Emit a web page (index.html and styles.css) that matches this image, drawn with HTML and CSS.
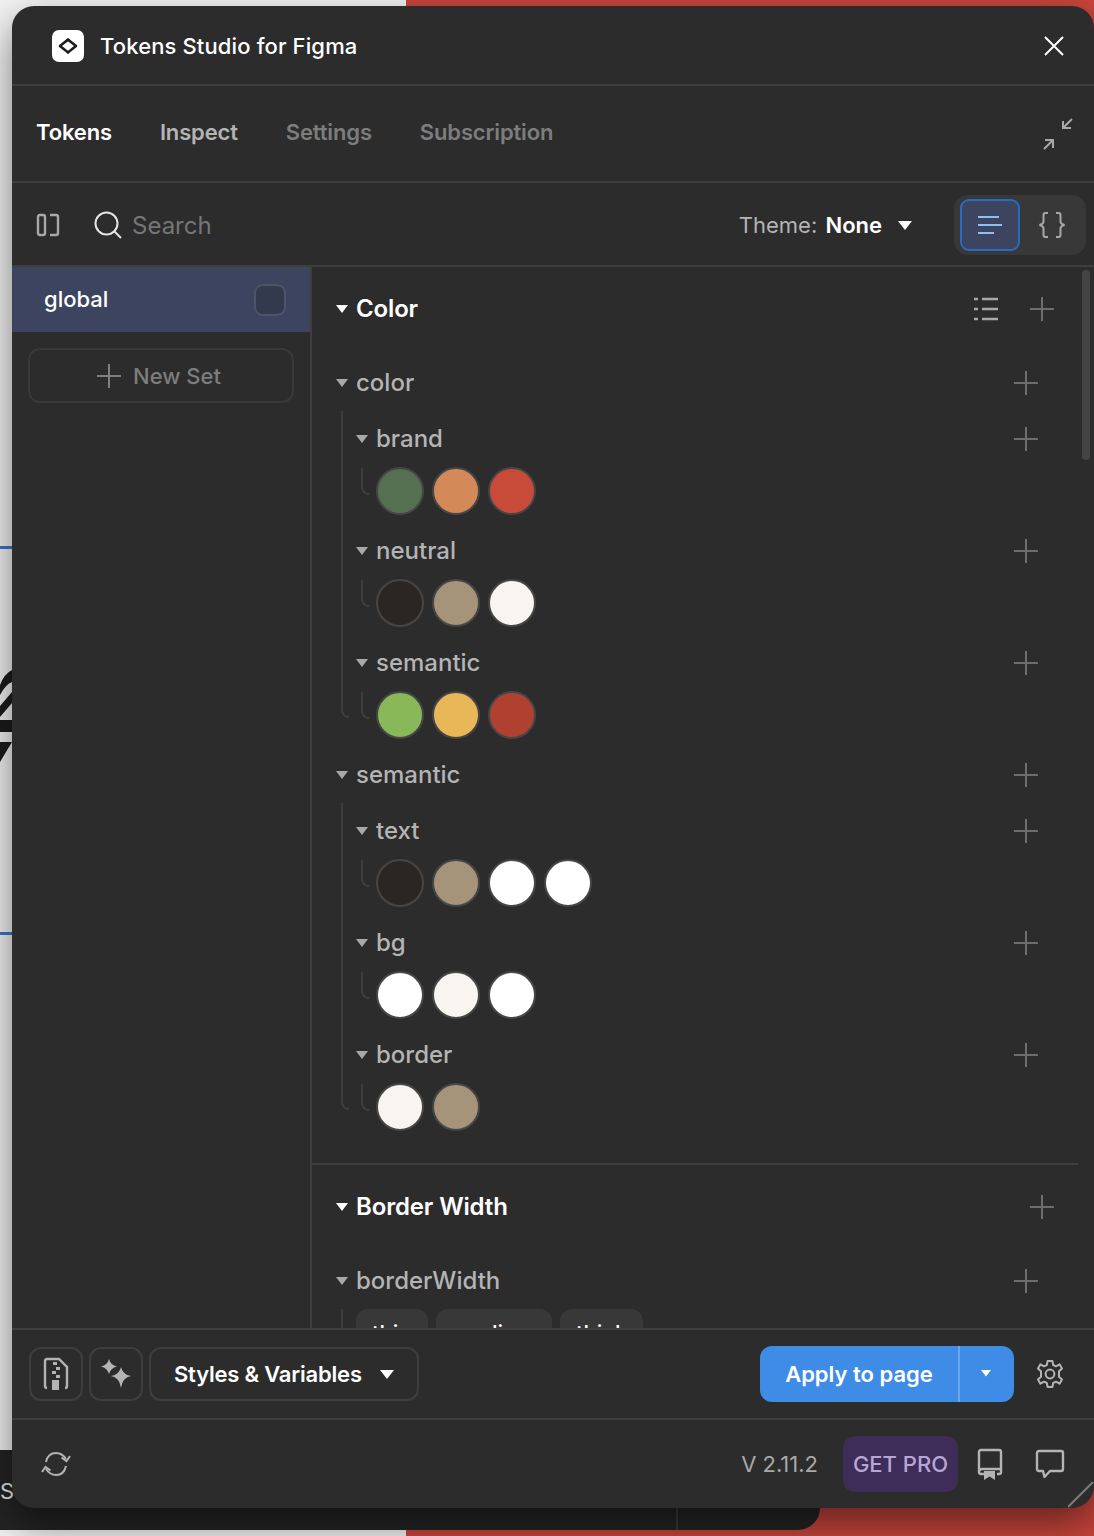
FILE: index.html
```html
<!DOCTYPE html>
<html lang="en">
<head>
<meta charset="utf-8">
<title>Tokens Studio for Figma</title>
<link rel="stylesheet" href="styles.css">
</head>
<body>
<div class="desktop">
  <div class="bg-white"></div>
  <div class="bg-red"></div>
  <div class="bg-line bg-line-a"></div>
  <div class="bg-line bg-line-b"></div>
  <svg class="bg-logo" width="12" height="100" viewBox="0 0 12 100"><path d="M0 16 Q4 5 12 1 V13 Q6 15 0 26 Z M0 37 L12 23 V34 L0 48 Z M0 51 H12 V63 H0 Z M0 73 H12 L0 93 Z" fill="#1c1c1c"/></svg>
  <div class="bg-dock"><span class="bg-dock-s">S</span><span class="bg-dock-rule"></span></div>

  <section class="window">
    <header class="titlebar">
      <div class="logo">
        <svg width="22" height="20" viewBox="0 0 22 20"><path d="M11 3.5 Q12.5 5 14 6 L19 10 L14 14 Q12.5 15 11 16.5 Q9.5 15 8 14 L3 10 L8 6 Q9.5 5 11 3.5 Z" fill="#fff" stroke="#1c1c1c" stroke-width="2.6" stroke-linejoin="round"/></svg>
      </div>
      <h1 class="title">Tokens Studio for Figma</h1>
      <svg class="close" width="22" height="22" viewBox="0 0 22 22"><path d="M2 2 L20 20 M20 2 L2 20" stroke="#fff" stroke-width="2" fill="none"/></svg>
    </header>

    <nav class="tabs">
      <span class="tab tab-on">Tokens</span>
      <span class="tab tab-mid">Inspect</span>
      <span class="tab">Settings</span>
      <span class="tab">Subscription</span>
      <svg class="collapse" width="32" height="32" viewBox="0 0 32 32"><path d="M30 1 L21 10 M21 3 V10 H29 M2 31 L11 22 M3 22 H11 V30" stroke="#a8a8a8" stroke-width="2" fill="none"/></svg>
    </nav>

    <div class="toolbar">
      <svg class="panel-icon" width="24" height="24" viewBox="0 0 24 24"><path d="M4 2 H7 Q9 2 9 4 V20 Q9 22 7 22 H4 Q2 22 2 20 V4 Q2 2 4 2 Z M14 2 H20 Q22 2 22 4 V20 Q22 22 20 22 H14" stroke="#a8a8a8" stroke-width="2.4" fill="none"/></svg>
      <svg class="search-icon" width="28" height="28" viewBox="0 0 28 28"><circle cx="12.5" cy="12.5" r="11" stroke="#e4e4e4" stroke-width="2" fill="none"/><path d="M20.5 20.5 L27 27" stroke="#e4e4e4" stroke-width="2"/></svg>
      <span class="search-text">Search</span>
      <span class="theme">Theme: <b>None</b></span>
      <svg class="caret caret-theme" width="14" height="10" viewBox="0 0 14 10"><path d="M0 0 H14 L7 9 Z" fill="#fff"/></svg>
      <div class="toggle">
        <span class="toggle-btn toggle-on">
          <svg width="26" height="22" viewBox="0 0 26 22"><path d="M1 3 H22 M1 11 H25 M1 19 H17" stroke="#8cc0f4" stroke-width="2"/></svg>
        </span>
        <span class="toggle-btn">
          <svg width="30" height="28" viewBox="0 0 30 28"><path d="M11 2 H8.5 Q6.5 2 6.5 4 V10.5 Q6.5 13 2.5 14 Q6.5 15 6.5 17.5 V24 Q6.5 26 8.5 26 H11 M19 2 H21.5 Q23.5 2 23.5 4 V10.5 Q23.5 13 27.5 14 Q23.5 15 23.5 17.5 V24 Q23.5 26 21.5 26 H19" stroke="#a8a8a8" stroke-width="2" fill="none"/></svg>
        </span>
      </div>
    </div>

    <div class="body">
      <aside class="sidebar">
        <div class="set-row"><span>global</span><span class="check"></span></div>
        <div class="new-set">
          <svg class="plus-svg" width="24" height="24" viewBox="0 0 24 24"><path d="M12 0 V24 M0 12 H24" stroke="#808080" stroke-width="2"/></svg>
          <span>New Set</span>
        </div>
      </aside>

      <main class="tokens">
        <div class="scroll-thumb"></div>

        <section class="section section-rule">
          <div class="row heading">
            <i class="tri tri-white"></i><span>Color</span>
            <svg class="list-icon" width="24" height="26" viewBox="0 0 24 26"><path d="M0 3 H4 M8 3 H24 M0 13 H4 M8 13 H24 M0 23 H4 M8 23 H24" stroke="#a8a8a8" stroke-width="2.4"/></svg>
            <i class="plus plus-heading"></i>
          </div>
          <div class="gap"></div>
          <div class="row group"><i class="tri"></i><span>color</span><i class="plus"></i></div>
          <div class="nest">
            <div class="rail"></div>
            <div class="nest-body">
              <div class="row sub"><i class="tri"></i><span>brand</span><i class="plus"></i></div>
              <div class="swatches"><i class="tick"></i><i class="dot c-green"></i><i class="dot c-orange"></i><i class="dot c-red"></i></div>
              <div class="row sub"><i class="tri"></i><span>neutral</span><i class="plus"></i></div>
              <div class="swatches"><i class="tick"></i><i class="dot c-ink"></i><i class="dot c-sand"></i><i class="dot c-cream"></i></div>
              <div class="row sub"><i class="tri"></i><span>semantic</span><i class="plus"></i></div>
              <div class="swatches"><i class="tick"></i><i class="dot c-lime"></i><i class="dot c-yellow"></i><i class="dot c-brick"></i></div>
            </div>
          </div>
          <div class="row group"><i class="tri"></i><span>semantic</span><i class="plus"></i></div>
          <div class="nest">
            <div class="rail"></div>
            <div class="nest-body">
              <div class="row sub"><i class="tri"></i><span>text</span><i class="plus"></i></div>
              <div class="swatches"><i class="tick"></i><i class="dot c-ink"></i><i class="dot c-sand"></i><i class="dot c-white"></i><i class="dot c-white"></i></div>
              <div class="row sub"><i class="tri"></i><span>bg</span><i class="plus"></i></div>
              <div class="swatches"><i class="tick"></i><i class="dot c-white"></i><i class="dot c-cream"></i><i class="dot c-white"></i></div>
              <div class="row sub"><i class="tri"></i><span>border</span><i class="plus"></i></div>
              <div class="swatches"><i class="tick"></i><i class="dot c-cream"></i><i class="dot c-sand"></i></div>
            </div>
          </div>
        </section>

        <section class="section">
          <div class="row heading"><i class="tri tri-white"></i><span>Border Width</span><i class="plus plus-heading"></i></div>
          <div class="gap"></div>
          <div class="row group"><i class="tri"></i><span>borderWidth</span><i class="plus"></i></div>
          <div class="nest nest-open">
            <div class="rail"></div>
            <div class="nest-body chips">
              <span class="chip">thin</span><span class="chip">medium</span><span class="chip">thick</span>
            </div>
          </div>
        </section>
      </main>
    </div>

    <div class="actions">
      <span class="square-btn">
        <svg width="26" height="34" viewBox="0 0 26 34"><path d="M4 31 Q2 31 2 29 V4 Q2 2 4 2 H16 L24 10 V29 Q24 31 22 31" stroke="#b4b4b4" stroke-width="2.4" fill="none"/><path d="M10 5 H14 V8 H10 Z M13 10 H17 V13 H13 Z M9 14 H13 V17 H9 Z M13 18 H17 V21 H13 Z M9 23 H16 V33 H9 Z" fill="#b4b4b4"/></svg>
      </span>
      <span class="square-btn">
        <svg width="30" height="30" viewBox="0 0 30 30"><path d="M8 0 Q9.5 6 16 7.5 Q9.5 9 8 15 Q6.5 9 0 7.5 Q6.5 6 8 0 Z M20 8 Q21.5 15.500 30 17 Q21.500 18.500 20 29 Q18.500 18.500 10 17 Q18.500 15.500 20 8 Z" fill="#b4b4b4"/></svg>
      </span>
      <span class="select-btn">Styles &amp; Variables
        <svg class="caret" width="14" height="10" viewBox="0 0 14 10"><path d="M0 0 H14 L7 9 Z" fill="#fff"/></svg>
      </span>
      <span class="apply">
        <span class="apply-main">Apply to page</span>
        <span class="apply-more"><svg width="10" height="7" viewBox="0 0 10 7"><path d="M0 0 H10 L5 6.5 Z" fill="#fff"/></svg></span>
      </span>
      <svg class="gear" width="30" height="30" viewBox="0 0 30 30"><path d="M12.6 2 H17.4 L18.2 6 L21 7.3 L24.6 5.3 L27 9.4 L24 12.2 V15 V17.8 L27 20.6 L24.6 24.7 L21 22.7 L18.2 24 L17.4 28 H12.6 L11.8 24 L9 22.7 L5.4 24.7 L3 20.6 L6 17.8 V12.2 L3 9.4 L5.4 5.3 L9 7.3 L11.8 6 Z" stroke="#b4b4b4" stroke-width="2" stroke-linejoin="round" fill="none"/><circle cx="15" cy="15" r="4.4" stroke="#b4b4b4" stroke-width="2" fill="none"/></svg>
    </div>

    <footer class="statusbar">
      <svg class="sync" width="30" height="26" viewBox="0 0 30 26"><path d="M5 11 Q7 2 15 2 Q21 2 25 8 M25 15 Q23 24 15 24 Q9 24 5 18" stroke="#b4b4b4" stroke-width="2" fill="none"/><path d="M29 5 L25.5 10 L20.5 6.5 M1 21 L4.5 16 L9.5 19.5" stroke="#b4b4b4" stroke-width="2" fill="none"/></svg>
      <span class="version">V 2.11.2</span>
      <span class="pro">GET PRO</span>
      <svg class="book" width="26" height="32" viewBox="0 0 26 32"><path d="M7 26 H4 Q2 26 2 24 V4 Q2 2 4 2 H22 Q24 2 24 4 V24 Q24 26 22 26 H20 M2 24 Q2 21 5 21 H24" stroke="#b4b4b4" stroke-width="2.4" fill="none"/><path d="M7 23 H18 V32 L12.5 28.5 L7 32 Z" fill="#b4b4b4"/></svg>
      <svg class="chat" width="30" height="30" viewBox="0 0 30 30"><path d="M4 2 H26 Q28 2 28 4 V20 Q28 22 26 22 H15 L9.5 28 L8 22 H4 Q2 22 2 20 V4 Q2 2 4 2 Z" stroke="#b4b4b4" stroke-width="2.4" stroke-linejoin="round" fill="none"/></svg>
      <svg class="resize" width="26" height="26" viewBox="0 0 26 26"><path d="M0 25 L25 0" stroke="#7c7c7c" stroke-width="2"/></svg>
    </footer>
  </section>
</div>
</body>
</html>
```

FILE: styles.css
```css
* { box-sizing: border-box; }

html, body {
  margin: 0;
  height: 100%;
  overflow: hidden;
}

body {
  font-family: Inter, "Liberation Sans", sans-serif;
  color: #fff;
  background: #f3f3f3;
}

.desktop {
  position: relative;
  width: 1094px;
  height: 1536px;
  overflow: hidden;
}

.bg-white {
  position: absolute;
  left: 0;
  top: 0;
  width: 406px;
  height: 1536px;
  background: #f3f3f3;
}

.bg-red {
  position: absolute;
  left: 406px;
  top: 0;
  right: 0;
  height: 1536px;
  background: #c8453c;
}

.bg-line {
  position: absolute;
  left: 0;
  width: 12px;
  height: 3px;
  background: #3a78c8;
}
.bg-line-a { top: 546px; }
.bg-line-b { top: 932px; }

.bg-logo {
  position: absolute;
  left: 0;
  top: 669px;
}

.bg-dock {
  position: absolute;
  left: 0;
  top: 1450px;
  width: 820px;
  height: 80px;
  background: #242424;
  border-bottom-right-radius: 22px;
}

.bg-dock-s {
  position: absolute;
  left: 0;
  top: 28px;
  font-size: 22px;
  line-height: 26px;
  color: #e8e8e8;
}

.bg-dock-rule {
  position: absolute;
  left: 676px;
  top: 0;
  bottom: 0;
  width: 2px;
  background: #3a3a3a;
}

.window {
  position: absolute;
  left: 12px;
  top: 6px;
  width: 1082px;
  height: 1502px;
  display: flex;
  flex-direction: column;
  background: #2c2c2c;
  border-radius: 22px;
  overflow: hidden;
  box-shadow: 0 16px 40px rgba(0, 0, 0, .5);
}

.titlebar {
  flex: none;
  height: 80px;
  display: flex;
  align-items: center;
  padding: 2px 29px 0 40px;
  border-bottom: 2px solid #3e3e3e;
}

.logo {
  width: 32px;
  height: 32px;
  margin-right: 16px;
  background: #fff;
  border-radius: 7px;
  display: flex;
  align-items: center;
  justify-content: center;
}

.title {
  margin: 0;
  font-size: 22px;
  line-height: 28px;
  font-weight: 500;
  letter-spacing: .13px;
  color: #fff;
}

.close { margin-left: auto; }

.tabs {
  flex: none;
  height: 97px;
  display: flex;
  align-items: center;
  gap: 48px;
  padding: 0 20px 3px 24px;
  border-bottom: 2px solid #3e3e3e;
}

.tab {
  font-size: 22px;
  line-height: 28px;
  font-weight: 600;
  letter-spacing: -.15px;
  color: #7d7d7d;
}
.tab-on { color: #fff; }
.tab-mid { color: #b4b4b4; }

.collapse { margin: 3px 0 0 auto; }

.toolbar {
  flex: none;
  height: 84px;
  display: flex;
  align-items: center;
  padding: 2px 8px 0 24px;
  border-bottom: 2px solid #3e3e3e;
}

.panel-icon { margin-right: 34px; }
.search-icon { margin-right: 10px; }

.search-text {
  font-size: 24px;
  color: #767676;
}

.theme {
  margin-left: auto;
  font-size: 22px;
  color: #b4b4b4;
}
.theme b {
  margin-left: 2px;
  font-weight: 600;
  color: #fff;
}

.caret-theme {
  margin: 2px 42px 0 16px;
}

.toggle {
  width: 132px;
  height: 60px;
  padding: 4px 6px;
  display: flex;
  background: #383838;
  border-radius: 14px;
}

.toggle-btn {
  width: 60px;
  height: 52px;
  display: flex;
  align-items: center;
  justify-content: center;
  border-radius: 9px;
}
.toggle-btn + .toggle-btn { padding-left: 4px; }

.toggle-on {
  background: #3c4460;
  border: 2px solid #2a6bc0;
}

.body {
  flex: 1;
  min-height: 0;
  display: flex;
}

.sidebar {
  flex: none;
  width: 300px;
  border-right: 2px solid #3e3e3e;
}

.set-row {
  height: 65px;
  display: flex;
  align-items: center;
  justify-content: space-between;
  padding: 0 24px 2px 32px;
  background: #3c4460;
  font-size: 22px;
  font-weight: 500;
  color: #fff;
}

.check {
  width: 32px;
  height: 32px;
  background: #343a4e;
  border: 2px solid #4e5468;
  border-radius: 9px;
  margin-top: 2px;
}

.new-set {
  height: 55px;
  margin: 16px 16px 0 16px;
  padding-right: 4px;
  display: flex;
  align-items: center;
  justify-content: center;
  gap: 12px;
  border: 2px solid #393939;
  border-radius: 12px;
  font-size: 22px;
  font-weight: 500;
  color: #7d7d7d;
}

.tokens {
  position: relative;
  flex: 1;
  min-width: 0;
  padding-right: 16px;
  overflow: hidden;
}

.scroll-thumb {
  position: absolute;
  right: 4px;
  top: 3px;
  width: 8px;
  height: 190px;
  border-radius: 4px;
  background: #444;
}

.section {
  padding: 14px 24px 0 24px;
}

.section-rule {
  padding-bottom: 24px;
  border-bottom: 2px solid #3e3e3e;
}

.row {
  height: 56px;
  display: flex;
  align-items: center;
  font-size: 24px;
  line-height: 30px;
  font-weight: 500;
  color: #b4b4b4;
}
.row > span { margin-left: 8px; }

.heading {
  font-weight: 600;
  letter-spacing: -.15px;
  color: #fff;
}

.group, .sub { padding-right: 16px; }

.gap { height: 18px; }

.tri {
  flex: none;
  width: 0;
  height: 0;
  border-left: 6px solid transparent;
  border-right: 6px solid transparent;
  border-top: 8px solid #a8a8a8;
}
.tri-white { border-top-color: #fff; }

.plus {
  position: relative;
  flex: none;
  width: 24px;
  height: 24px;
  margin-left: auto;
}
.plus::before, .plus::after {
  content: "";
  position: absolute;
  background: #6e6e6e;
}
.plus::before { left: 11px; top: 0; width: 2px; height: 24px; }
.plus::after { left: 0; top: 11px; width: 24px; height: 2px; }

.list-icon { margin-left: auto; margin-right: 32px; }
.list-icon + .plus { margin-left: 0; }

.nest { display: flex; }

.rail {
  flex: none;
  width: 8px;
  margin: 0 7px 29px 5px;
  border-left: 2px solid #3e3e3e;
  border-bottom: 2px solid #3e3e3e;
  border-bottom-left-radius: 8px;
}

.nest-open .rail {
  margin-bottom: 0;
  border-bottom: 0;
  border-radius: 0;
}

.nest-body {
  flex: 1;
  min-width: 0;
}

.swatches {
  height: 56px;
  display: flex;
  align-items: flex-start;
  gap: 8px;
}

.tick {
  flex: none;
  width: 8px;
  height: 27px;
  margin: 1px -1px 0 5px;
  border-left: 2px solid #3e3e3e;
  border-bottom: 2px solid #3e3e3e;
  border-bottom-left-radius: 8px;
}

.dot {
  flex: none;
  width: 48px;
  height: 48px;
  border-radius: 50%;
  border: 2px solid #464646;
}

.c-green { background: #547050; }
.c-orange { background: #d48a58; }
.c-red { background: #c84a38; }
.c-ink { background: #2c2622; }
.c-sand { background: #a5937a; }
.c-cream { background: #f8f5f0; }
.c-white { background: #fff; }
.c-lime { background: #88b858; }
.c-yellow { background: #e8b858; }
.c-brick { background: #b04030; }

.chips {
  display: flex;
  gap: 8px;
}

.chip {
  height: 48px;
  padding: 0 16px;
  display: flex;
  align-items: center;
  background: #383838;
  border-radius: 12px;
  font-size: 22px;
  font-weight: 500;
  color: #fff;
}

.actions {
  flex: none;
  height: 92px;
  display: flex;
  align-items: center;
  gap: 6px;
  padding: 0 29px 0 17px;
  border-top: 2px solid #3e3e3e;
  border-bottom: 2px solid #3e3e3e;
}

.square-btn {
  flex: none;
  width: 54px;
  height: 54px;
  display: flex;
  align-items: center;
  justify-content: center;
  border: 2px solid #3e3e3e;
  border-radius: 12px;
}

.select-btn {
  flex: none;
  width: 270px;
  height: 54px;
  display: flex;
  align-items: center;
  gap: 18px;
  padding-left: 23px;
  border: 2px solid #3e3e3e;
  border-radius: 12px;
  font-size: 22px;
  font-weight: 600;
  letter-spacing: -.2px;
  color: #fff;
}
.select-btn .caret { margin-top: 2px; }

.apply {
  flex: none;
  width: 254px;
  height: 56px;
  margin-left: auto;
  display: flex;
  background: #3f8ce6;
  border-radius: 12px;
  font-size: 22px;
  font-weight: 600;
  color: #fff;
}

.apply-main {
  flex: none;
  width: 200px;
  display: flex;
  align-items: center;
  justify-content: center;
  border-right: 2px solid #68a6ee;
}

.apply-more {
  flex: 1;
  display: flex;
  align-items: center;
  justify-content: center;
  padding: 0 2px 1px 0;
}

.gear { flex: none; margin-left: 15px; }

.statusbar {
  position: relative;
  flex: none;
  height: 88px;
  display: flex;
  align-items: center;
  padding: 0 29px;
}

.version {
  margin-left: auto;
  font-size: 22px;
  color: #a8a8a8;
}

.pro {
  width: 115px;
  height: 56px;
  margin-left: 25px;
  display: flex;
  align-items: center;
  justify-content: center;
  background: #3e2d58;
  border-radius: 12px;
  font-size: 22px;
  font-weight: 500;
  color: #b9a6d6;
}

.book { margin-left: 19px; }
.chat { margin-left: 32px; }

.resize {
  position: absolute;
  right: 0;
  bottom: 0;
}
```
